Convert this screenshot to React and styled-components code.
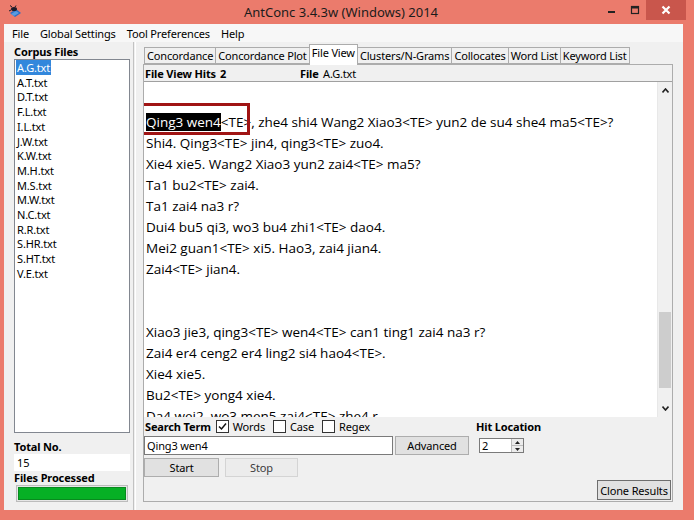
import React from "react";
import styled, { createGlobalStyle } from "styled-components";

const UI = `"Noto Sans", "Open Sans", sans-serif`;

const GlobalStyle = createGlobalStyle`
  html, body {
    margin: 0;
    padding: 0;
  }
  body {
    width: 694px;
    height: 520px;
    overflow: hidden;
    font-family: ${UI};
    font-size: 11px;
    letter-spacing: -0.15px;
    color: #000;
  }
`;

const Window = styled.div`
  width: 694px;
  height: 520px;
  box-sizing: border-box;
  background: #eb7b6c;
  display: flex;
  flex-direction: column;
  padding: 0 11px 10px 4px;
`;

const TitleBar = styled.div`
  height: 24px;
  margin: 0 -11px 0 -4px;
  padding-right: 8px;
  display: grid;
  grid-template-columns: 1fr auto 1fr;
  align-items: start;
`;

const AppIcon = styled.div`
  padding: 5px 0 0 8px;
  height: 14px;
`;

const Title = styled.div`
  font-size: 13px;
  letter-spacing: 0;
  line-height: 24px;
  color: #1b1b1b;
  margin-right: 4px;
`;

const Controls = styled.div`
  display: flex;
  justify-content: flex-end;
  align-items: flex-start;
`;

const CtrlButton = styled.div`
  width: ${(p) => p.w}px;
  height: 20px;
  display: flex;
  align-items: center;
  justify-content: center;
  background: ${(p) => (p.close ? "#c9564c" : "transparent")};
`;

const Body = styled.div`
  flex: 1;
  background: #f0f0f0;
  display: flex;
  flex-direction: column;
  min-height: 0;
`;

const MenuBar = styled.div`
  height: 18px;
  display: flex;
  align-items: center;
  padding-left: 2.5px;
  background: #f7f7f7;
`;

const MenuItem = styled.span`
  padding: 0 5.5px;
`;

const Main = styled.div`
  flex: 1;
  display: flex;
  min-height: 0;
`;

const LeftPane = styled.div`
  width: 129px;
  box-sizing: border-box;
  padding: 0 3px 8px 10px;
  display: flex;
  flex-direction: column;
`;

const Label = styled.div`
  font-weight: 700;
  line-height: ${(p) => p.lh || 15}px;
  margin-top: ${(p) => p.mt || 0}px;
`;

const FileList = styled.div`
  flex: 1;
  background: #fff;
  border: 1px solid #828790;
  padding-top: 1px;
  margin-bottom: 6px;
`;

const FileItem = styled.div`
  line-height: 14.7px;
  padding-left: 1px;
  span {
    padding: 0 1px;
    background: ${(p) => (p.selected ? "#3287dc" : "transparent")};
    color: ${(p) => (p.selected ? "#fff" : "#000")};
  }
`;

const CountField = styled.div`
  background: #fff;
  height: 17px;
  line-height: 17px;
  padding-left: 3px;
`;

const Progress = styled.div`
  height: 17px;
  box-sizing: border-box;
  margin: 0 2px;
  border: 1px solid #bcbcbc;
  padding: 1px;
  background: #e6e6e6;
  div {
    height: 100%;
    background: #06b025;
    border: 1px solid #088a1e;
    box-sizing: border-box;
  }
`;

const Splitter = styled.div`
  width: 1px;
  border-left: 1px solid #c2c2c2;
  border-right: 1px solid #fff;
`;

const RightPane = styled.div`
  flex: 1;
  display: flex;
  flex-direction: column;
  padding: 2px 10px 8px 7px;
  min-width: 0;
`;

const TabStrip = styled.div`
  height: 20px;
  display: flex;
  align-items: flex-end;
  padding-left: 2px;
`;

const Tab = styled.div`
  height: ${(p) => (p.active ? 21 : 17)}px;
  line-height: 16px;
  box-sizing: border-box;
  padding: 0 2px;
  border: 1px solid #acacac;
  border-bottom: ${(p) => (p.active ? "none" : "1px solid #acacac")};
  margin-left: -1px;
  background: ${(p) => (p.active ? "#fff" : "#f0f0f0")};
  position: relative;
  z-index: ${(p) => (p.active ? 2 : 1)};
  white-space: nowrap;
  margin-bottom: ${(p) => (p.active ? -1 : 0)}px;
`;

const Panel = styled.div`
  flex: 1;
  border: 1px solid #acacac;
  background: #f0f0f0;
  display: flex;
  flex-direction: column;
  min-height: 0;
`;

const HitsRow = styled.div`
  height: 16px;
  display: flex;
  align-items: center;
  padding-left: 1px;
  white-space: nowrap;
`;

const HitsText = styled.span`
  font-weight: ${(p) => (p.bold ? 700 : 400)};
  width: ${(p) => (p.w ? `${p.w}px` : "auto")};
`;

const TextView = styled.div`
  flex: 1;
  display: flex;
  border-top: 1px solid #a0a0a0;
  min-height: 0;
`;

const TextContent = styled.div`
  flex: 1;
  background: #fff;
  overflow: hidden;
  padding: 9px 0 0 2px;
  font-family: "Open Sans", "Noto Sans", sans-serif;
  font-size: 13.5px;
  letter-spacing: 0;
  line-height: 21px;
  white-space: pre;
`;

const Line = styled.div`
  height: 21px;
  position: relative;
`;

const Hit = styled.span`
  background: #000;
  color: #fff;
`;

const RedBox = styled.div`
  position: absolute;
  left: -5px;
  top: -9px;
  width: 103px;
  height: 26px;
  border: 3px solid #a01414;
`;

const ScrollBar = styled.div`
  width: 14px;
  background: #f0f0f0;
  display: flex;
  flex-direction: column;
  align-items: center;
  border-left: 1px solid #e8e8e8;
`;

const Arrow = styled.div`
  height: 17px;
  display: flex;
  align-items: center;
  justify-content: center;
`;

const Track = styled.div`
  flex: 1;
  width: 100%;
  display: flex;
  flex-direction: column;
  justify-content: flex-end;
  padding-bottom: 12px;
`;

const Thumb = styled.div`
  height: 76px;
  margin: 0 1px;
  background: #cdcdcd;
`;

const ControlArea = styled.div`
  height: 84px;
  display: flex;
  flex-direction: column;
`;

const Row = styled.div`
  display: flex;
  align-items: center;
  height: ${(p) => p.h}px;
  margin-top: ${(p) => p.mt || 0}px;
  justify-content: ${(p) => (p.end ? "flex-end" : "flex-start")};
  white-space: nowrap;
`;

const SearchGroup = styled.div`
  width: 331px;
  display: flex;
  align-items: center;
  padding-left: 1px;
`;

const BoldLabel = styled.span`
  font-weight: 700;
  margin-right: ${(p) => p.mr || 0}px;
`;

const Check = styled.span`
  display: inline-flex;
  align-items: center;
  margin-right: 8px;
`;

const Box = styled.span`
  width: 11px;
  height: 11px;
  border: 1px solid #333;
  background: #fff;
  margin-right: 4px;
  display: inline-flex;
  align-items: center;
  justify-content: center;
`;

const TextInput = styled.div`
  width: 245px;
  height: 17px;
  background: #fff;
  border: 1px solid #7a7a7a;
  line-height: 17px;
  padding-left: 2px;
`;

const Button = styled.div`
  width: ${(p) => p.w}px;
  height: ${(p) => p.h || 19}px;
  box-sizing: border-box;
  margin-left: ${(p) => p.ml || 0}px;
  margin-right: ${(p) => p.mr || 0}px;
  display: flex;
  align-items: center;
  justify-content: center;
  background: ${(p) => (p.disabled ? "#ececec" : "#e1e1e1")};
  border: 1px solid ${(p) => (p.disabled ? "#d4d4d4" : p.focus ? "#6e6e6e" : "#adadad")};
  color: ${(p) => (p.disabled ? "#3c3c3c" : "#000")};
`;

const Spinner = styled.div`
  width: 45px;
  height: 15px;
  margin-left: 10px;
  box-sizing: border-box;
  border: 1px solid #7a7a7a;
  background: #fff;
  display: flex;
  justify-content: space-between;
  line-height: 13px;
  padding-left: 2px;
`;

const SpinArrows = styled.div`
  width: 11px;
  border-left: 1px solid #bcbcbc;
  display: flex;
  flex-direction: column;
  div {
    flex: 1;
    display: flex;
    align-items: center;
    justify-content: center;
    background: #ececec;
  }
  div + div {
    border-top: 1px solid #bcbcbc;
  }
`;

const files = [
  "A.G.txt", "A.T.txt", "D.T.txt", "F.L.txt", "I.L.txt", "J.W.txt", "K.W.txt",
  "M.H.txt", "M.S.txt", "M.W.txt", "N.C.txt", "R.R.txt", "S.HR.txt", "S.HT.txt", "V.E.txt",
];

const tabs = [
  "Concordance", "Concordance Plot", "File View", "Clusters/N-Grams",
  "Collocates", "Word List", "Keyword List",
];

const lines = [
  "",
  null,
  "Shi4. Qing3<TE> jin4, qing3<TE> zuo4.",
  "Xie4 xie5. Wang2 Xiao3 yun2 zai4<TE> ma5?",
  "Ta1 bu2<TE> zai4.",
  "Ta1 zai4 na3 r?",
  "Dui4 bu5 qi3, wo3 bu4 zhi1<TE> dao4.",
  "Mei2 guan1<TE> xi5. Hao3, zai4 jian4.",
  "Zai4<TE> jian4.",
  "",
  "",
  "Xiao3 jie3, qing3<TE> wen4<TE> can1 ting1 zai4 na3 r?",
  "Zai4 er4 ceng2 er4 ling2 si4 hao4<TE>.",
  "Xie4 xie5.",
  "Bu2<TE> yong4 xie4.",
  "Da4 wei2, wo3 men5 zai4<TE> zhe4 r",
];

const Triangle = ({ up }) => (
  <svg width="7" height="5" viewBox="0 0 7 5">
    <path d={up ? "M0.5 4.5 L3.5 1 L6.5 4.5" : "M0.5 0.5 L3.5 4 L6.5 0.5"} fill="none" stroke="#222" strokeWidth="1.6" />
  </svg>
);

const TinyTri = ({ up }) => (
  <svg width="5" height="3" viewBox="0 0 5 3">
    <path d={up ? "M0 3 L2.5 0 L5 3 Z" : "M0 0 L2.5 3 L5 0 Z"} fill="#222" />
  </svg>
);

const AntIcon = () => (
  <svg width="14" height="14" viewBox="0 0 14 14">
    <path d="M2 8 L8 4 L13 8 L7 12 Z" fill="#2d6fc4" />
    <path d="M3 9 L8 6 L11 8 L6 11 Z" fill="#5b9be0" />
    <ellipse cx="6" cy="4" rx="3" ry="2" fill="#1c1c2a" />
    <path d="M4 2 L2 0.5 M7 2 L8 0.5 M3 5 L1 6" stroke="#1c1c2a" strokeWidth="1" />
  </svg>
);

export default function App() {
  return (
    <>
      <GlobalStyle />
      <Window>
        <TitleBar>
          <AppIcon>
            <AntIcon />
          </AppIcon>
          <Title>AntConc 3.4.3w (Windows) 2014</Title>
          <Controls>
            <CtrlButton w={24}>
              <svg width="10" height="10" viewBox="0 0 10 10">
                <rect x="1" y="6" width="7" height="2" fill="#222" />
              </svg>
            </CtrlButton>
            <CtrlButton w={22}>
              <svg width="10" height="10" viewBox="0 0 10 10">
                <rect x="1.5" y="1.5" width="7" height="7" fill="none" stroke="#222" strokeWidth="1.2" />
                <rect x="1.5" y="1.5" width="7" height="2" fill="#222" />
              </svg>
            </CtrlButton>
            <CtrlButton w={40} close>
              <svg width="10" height="10" viewBox="0 0 10 10">
                <path d="M1.5 1.5 L8.5 8.5 M8.5 1.5 L1.5 8.5" stroke="#fff" strokeWidth="2.2" />
              </svg>
            </CtrlButton>
          </Controls>
        </TitleBar>
        <Body>
          <MenuBar>
            <MenuItem>File</MenuItem>
            <MenuItem>Global Settings</MenuItem>
            <MenuItem>Tool Preferences</MenuItem>
            <MenuItem>Help</MenuItem>
          </MenuBar>
          <Main>
            <LeftPane>
              <Label mt={2}>Corpus Files</Label>
              <FileList>
                {files.map((f, i) => (
                  <FileItem key={f} selected={i === 0}>
                    <span>{f}</span>
                  </FileItem>
                ))}
              </FileList>
              <Label>Total No.</Label>
              <CountField>15</CountField>
              <Label lh={14}>Files Processed</Label>
              <Progress>
                <div />
              </Progress>
            </LeftPane>
            <Splitter />
            <RightPane>
              <TabStrip>
                {tabs.map((t) => (
                  <Tab key={t} active={t === "File View"}>
                    {t}
                  </Tab>
                ))}
              </TabStrip>
              <Panel>
                <HitsRow>
                  <HitsText bold w={75}>File View Hits</HitsText>
                  <HitsText bold w={80}>2</HitsText>
                  <HitsText bold w={23}>File</HitsText>
                  <HitsText>A.G.txt</HitsText>
                </HitsRow>
                <TextView>
                  <TextContent>
                    {lines.map((l, i) =>
                      l === null ? (
                        <Line key={i}>
                          <RedBox />
                          <Hit>Qing3 wen4</Hit>
                          {"<TE>, zhe4 shi4 Wang2 Xiao3<TE> yun2 de su4 she4 ma5<TE>?"}
                        </Line>
                      ) : (
                        <Line key={i}>{l}</Line>
                      )
                    )}
                  </TextContent>
                  <ScrollBar>
                    <Arrow>
                      <Triangle up />
                    </Arrow>
                    <Track>
                      <Thumb />
                    </Track>
                    <Arrow>
                      <Triangle />
                    </Arrow>
                  </ScrollBar>
                </TextView>
                <ControlArea>
                  <Row h={16} mt={1}>
                    <SearchGroup>
                      <BoldLabel mr={5}>Search Term</BoldLabel>
                      <Check>
                        <Box>
                          <svg width="9" height="9" viewBox="0 0 9 9">
                            <path d="M1 4.5 L3.5 7 L8 1.5" fill="none" stroke="#111" strokeWidth="1.5" />
                          </svg>
                        </Box>
                        Words
                      </Check>
                      <Check>
                        <Box />
                        Case
                      </Check>
                      <Check>
                        <Box />
                        Regex
                      </Check>
                    </SearchGroup>
                    <BoldLabel>Hit Location</BoldLabel>
                  </Row>
                  <Row h={19} mt={2}>
                    <TextInput>Qing3 wen4</TextInput>
                    <Button w={74} ml={2}>Advanced</Button>
                    <Spinner>
                      2
                      <SpinArrows>
                        <div><TinyTri up /></div>
                        <div><TinyTri /></div>
                      </SpinArrows>
                    </Spinner>
                  </Row>
                  <Row h={19} mt={3}>
                    <Button w={75}>Start</Button>
                    <Button w={73} ml={6} disabled>Stop</Button>
                  </Row>
                  <Row h={20} mt={3} end>
                    <Button w={74} h={20} mr={1} focus>Clone Results</Button>
                  </Row>
                </ControlArea>
              </Panel>
            </RightPane>
          </Main>
        </Body>
      </Window>
    </>
  );
}
